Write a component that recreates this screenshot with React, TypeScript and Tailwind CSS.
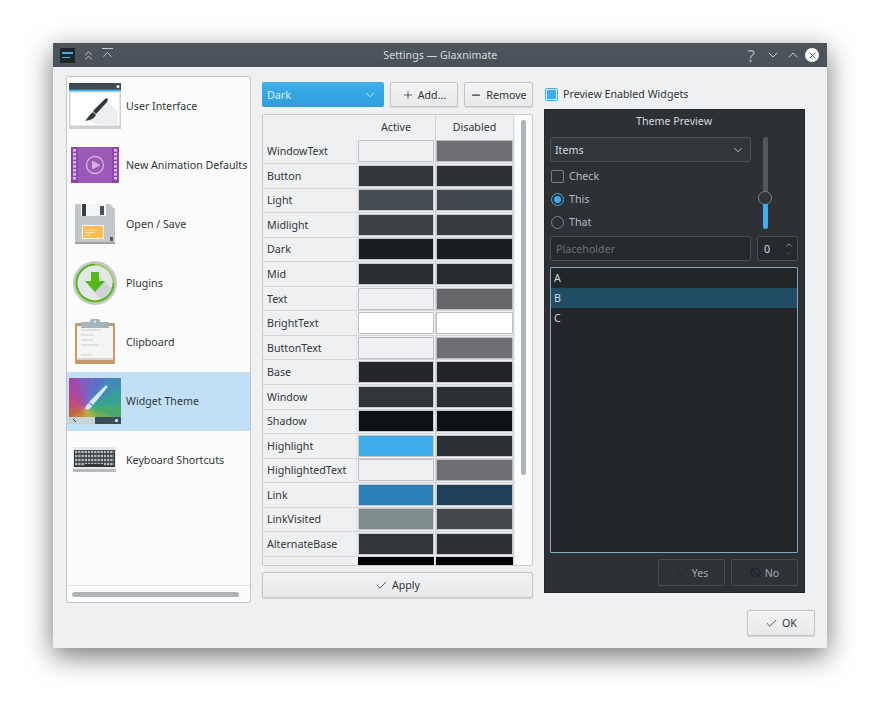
import { Check, ChevronDown, ChevronUp, ChevronsUp, Minus, Plus, X } from 'lucide-react';
import type { ReactNode } from 'react';

type Row = { name: string; active: string; disabled: string; outline?: boolean };

const rows: Row[] = [
  { name: 'WindowText', active: 'bg-[#eff0f1]', disabled: 'bg-[#6d6f72]', outline: true },
  { name: 'Button', active: 'bg-[#31363b]', disabled: 'bg-[#2d3135]' },
  { name: 'Light', active: 'bg-[#454c54]', disabled: 'bg-[#40464d]' },
  { name: 'Midlight', active: 'bg-[#3c4146]', disabled: 'bg-[#363b40]' },
  { name: 'Dark', active: 'bg-[#1b1e20]', disabled: 'bg-[#1b1e20]' },
  { name: 'Mid', active: 'bg-[#2a2e32]', disabled: 'bg-[#282c30]' },
  { name: 'Text', active: 'bg-[#eff0f1]', disabled: 'bg-[#656768]', outline: true },
  { name: 'BrightText', active: 'bg-white', disabled: 'bg-white', outline: true },
  { name: 'ButtonText', active: 'bg-[#eff0f1]', disabled: 'bg-[#6d6f72]', outline: true },
  { name: 'Base', active: 'bg-[#232629]', disabled: 'bg-[#212427]' },
  { name: 'Window', active: 'bg-[#31363b]', disabled: 'bg-[#2d3135]' },
  { name: 'Shadow', active: 'bg-[#0f1214]', disabled: 'bg-[#0f1214]' },
  { name: 'Highlight', active: 'bg-[#3daee9]', disabled: 'bg-[#2d3135]' },
  { name: 'HighlightedText', active: 'bg-[#eff0f1]', disabled: 'bg-[#6d6f72]', outline: true },
  { name: 'Link', active: 'bg-[#2980b9]', disabled: 'bg-[#213f57]' },
  { name: 'LinkVisited', active: 'bg-[#7f8c8d]', disabled: 'bg-[#43484b]' },
  { name: 'AlternateBase', active: 'bg-[#31363b]', disabled: 'bg-[#2d3135]' },
];

const pages = [
  { name: 'User Interface', icon: <UiIcon /> },
  { name: 'New Animation Defaults', icon: <FilmIcon /> },
  { name: 'Open / Save', icon: <FloppyIcon /> },
  { name: 'Plugins', icon: <PluginIcon /> },
  { name: 'Clipboard', icon: <ClipboardIcon /> },
  { name: 'Widget Theme', icon: <ThemeIcon />, selected: true },
  { name: 'Keyboard Shortcuts', icon: <KeyboardIcon /> },
];

function UiIcon() {
  return (
    <svg width="52" height="46" viewBox="0 0 52 46">
      <rect width="52" height="8" fill="#3f4a52" />
      <rect y="6.5" width="52" height="2" fill="#3daee9" />
      <circle cx="49" cy="3.5" r="1.5" fill="#fff" />
      <rect x="0" y="8.5" width="52" height="37.5" fill="#ccd0d2" />
      <rect x="1.5" y="9.5" width="49" height="33" fill="#fff" />
      <path d="M34 15 L49 28 V42 H30 L16 36 Z" fill="#eceeef" />
      <path d="M36 16 C38 14 40 16 38 19 L27 31 L24 28 Z" fill="#31363b" />
      <path d="M24 29 L27 32 C25 36 21 37 16 38 C19 35 20 32 24 29 Z" fill="#31363b" />
    </svg>
  );
}

function FilmIcon() {
  const holes = [0, 1, 2, 3, 4, 5, 6, 7];
  return (
    <svg width="48" height="36" viewBox="0 0 48 36">
      <rect width="48" height="36" fill="#8e44ad" />
      <rect x="7" y="0" width="34" height="36" fill="#9b59b6" />
      {holes.map((i) => (
        <g key={i} fill="#d9b8e8">
          <rect x="2" y={2 + i * 4} width="3" height="2.6" />
          <rect x="43" y={2 + i * 4} width="3" height="2.6" />
        </g>
      ))}
      <circle cx="24" cy="18" r="8.5" fill="none" stroke="#d3b3e2" strokeWidth="1.3" />
      <path d="M21 13.5 L29.5 18 L21 22.5 Z" fill="#d3b3e2" />
    </svg>
  );
}

function FloppyIcon() {
  return (
    <svg width="40" height="40" viewBox="0 0 40 40">
      <path d="M0 0 H35 L40 5 V40 H0 Z" fill="#c4c7c9" />
      <rect y="38" width="40" height="2" fill="#9ea2a5" />
      <rect x="6" y="0" width="25" height="12" fill="#f4f5f5" />
      <rect x="7" y="0" width="4" height="12" fill="#3a3f44" />
      <rect x="25" y="2" width="4" height="9" fill="#4b5157" />
      <rect x="7" y="21" width="22" height="14" fill="#f5f6f6" />
      <rect x="8" y="22" width="20" height="12" fill="#fdbc4b" />
      <path d="M10 26 H23 M10 28.5 H20 M10 31 H16" stroke="#fbe3b4" strokeWidth="1" />
      <rect x="35" y="33" width="3" height="4" fill="#565b60" />
    </svg>
  );
}

function PluginIcon() {
  return (
    <svg width="44" height="44" viewBox="0 0 44 44">
      <circle cx="22" cy="22" r="22" fill="#c4c7c9" />
      <circle cx="22" cy="22" r="19.5" fill="#e4e6e7" />
      <path d="M22 12 L40 28 A19.5 19.5 0 0 1 30 40 L16 26 Z" fill="#d0d3d4" />
      <path d="M22 3.5 A18.5 18.5 0 1 0 40.5 22" fill="none" stroke="#55b81a" strokeWidth="2" />
      <path d="M22 3.5 A18.5 18.5 0 0 1 40.5 22" fill="none" stroke="#9ccc6a" strokeWidth="2" />
      <path d="M18 11 H26 V20 H32 L22 31 L12 20 H18 Z" fill="#55b81a" />
    </svg>
  );
}

function ClipboardIcon() {
  return (
    <svg width="40" height="45" viewBox="0 0 40 45">
      <rect y="4" width="40" height="41" rx="1" fill="#c79a68" />
      <rect x="2" y="7" width="36" height="34" fill="#f4f5f5" />
      <rect x="2" y="39" width="36" height="2" fill="#d3d5d6" />
      <path d="M6 11 H26 M6 16 H18 M6 21 H18 M6 26 H24 M6 36 H17" stroke="#c9cccd" strokeWidth="1" />
      <rect x="6" y="3" width="28" height="6" rx="1" fill="#a5b4bf" />
      <rect x="15" y="0" width="10" height="5" rx="2" fill="#a5b4bf" />
      <circle cx="20" cy="2.5" r="0.9" fill="#fff" />
    </svg>
  );
}

// rainbow wedges fanning out of the brush tip, clockwise from the lower left
const wedges = ['#c4623f', '#c0506a', '#b8468c', '#a44aa8', '#7f5cc0', '#5a72c6', '#3f8cb4', '#38a092', '#4ba86c', '#74ae4c', '#a0b23c', '#bcae38', '#c89440', '#c87a40'];

function ThemeIcon() {
  const cx = 18;
  const cy = 30;
  const r = 70;
  const start = 150;
  const step = 360 / wedges.length;
  const point = (deg: number) => {
    const a = (deg * Math.PI) / 180;
    return (cx + r * Math.cos(a)).toFixed(1) + ' ' + (cy + r * Math.sin(a)).toFixed(1);
  };
  return (
    <svg width="52" height="46" viewBox="0 0 52 46">
      <clipPath id="themeClip">
        <rect width="52" height="39" />
      </clipPath>
      <filter id="themeBlur" x="-20%" y="-20%" width="140%" height="140%">
        <feGaussianBlur stdDeviation="1.6" />
      </filter>
      <g clipPath="url(#themeClip)">
        <g filter="url(#themeBlur)">
          {wedges.map((color, i) => (
            <path key={color} d={'M' + cx + ' ' + cy + ' L' + point(start + i * step) + ' L' + point(start + (i + 1) * step + 0.5) + ' Z'} fill={color} />
          ))}
        </g>
      </g>
      <rect y="39" width="26" height="7" fill="#c8d3d3" />
      <rect x="26" y="39" width="26" height="7" fill="#3a4d5a" />
      <circle cx="47.5" cy="42.5" r="1.5" fill="#fff" />
      <path d="M36 8 C38 7 39 8 38 10 L24 27 L20 24 Z" fill="#d6e8f4" />
      <path d="M20 25 L23 28 C22 31 19 32 16 31 C17 29 17 27 20 25 Z" fill="#d6e8f4" />
      <path d="M4 41 L7 44" stroke="#31363b" strokeWidth="1" />
    </svg>
  );
}

function KeyboardIcon() {
  const keys = [0, 1, 2, 3];
  return (
    <svg width="43" height="25" viewBox="0 0 43 25">
      <rect width="43" height="25" fill="#e6e7e8" />
      <rect x="1" y="3" width="41" height="17" fill="#31363b" />
      {keys.map((r) => (
        <path key={r} d={'M2 ' + (5 + r * 4) + ' H41'} stroke="#b4b8ba" strokeWidth="2.4" strokeDasharray="2.4 0.8" />
      ))}
      <rect x="12" y="17" width="18" height="3" fill="#31363b" />
      <rect y="22" width="43" height="3" fill="#b7babc" />
    </svg>
  );
}

function Swatch({ color, outline, wide }: { color: string; outline?: boolean; wide?: boolean }) {
  return (
    <div className="h-full flex items-center justify-center border-r border-[#d3d5d7]">
      <div className={(wide ? 'w-[77px]' : 'w-[76px]') + ' h-[22px] rounded-[1px] border ' + (outline ? 'border-[#bcbfc1] ' : 'border-[#c6c8ca] ') + color} />
    </div>
  );
}

function LightButton({ children, className }: { children: ReactNode; className: string }) {
  return (
    <div className={'flex items-center justify-center gap-[4px] rounded-[2px] border border-[#c3c5c7] bg-gradient-to-b from-[#f2f3f4] to-[#e8e9ea] shadow-[0_1px_1px_rgba(0,0,0,0.12)] ' + className}>
      {children}
    </div>
  );
}

function DarkButton({ children }: { children: ReactNode }) {
  return (
    <div className="w-[67px] h-[27px] flex items-center justify-center gap-[4px] rounded-[2px] border border-[#474c52] bg-[#2f3338] text-[#a2a6a9]">
      {children}
    </div>
  );
}

export default function App() {
  return (
    <div className="w-[880px] h-[711px] bg-white pt-[43px] pl-[53px] overflow-hidden text-[10.67px] text-[#31363b] font-['Noto_Sans',sans-serif]">
      <div className="w-[774px] h-[605px] flex flex-col bg-[#eff0f1] shadow-[0_8px_28px_rgba(0,0,0,0.55)] rounded-t-[2px]">
        <div className="h-[24px] shrink-0 flex items-center pl-[7px] pr-[8px] bg-gradient-to-b from-[#4d565d] to-[#49525a] text-[#c9cccd]">
          <div className="w-[15px] h-[15px] bg-[#232629] flex flex-col justify-center gap-[3px] px-[2px]">
            <div className="h-[1.5px] w-[11px] bg-[#3daee9]" />
            <div className="h-[1.5px] w-[8px] bg-[#3daee9]" />
          </div>
          <ChevronsUp className="ml-[6px]" size={15} strokeWidth={1.5} />
          <div className="ml-[4px] flex flex-col items-center">
            <div className="w-[11px] h-px bg-[#c9cccd]" />
            <ChevronUp className="-mt-[2px]" size={15} strokeWidth={1.5} />
          </div>
          <div className="flex-1 text-center text-[#d5d7d8] pl-[18px]">Settings — Glaxnimate</div>
          <span className="text-[17px] leading-none text-[#a9adb0] mr-[10px]">?</span>
          <ChevronDown size={16} strokeWidth={1.5} className="mr-[4px]" />
          <ChevronUp size={16} strokeWidth={1.5} className="mr-[4px]" />
          <div className="w-[14px] h-[14px] rounded-full bg-white flex items-center justify-center text-[#4d565d]">
            <X size={11} strokeWidth={2} />
          </div>
        </div>

        <div className="flex-1 flex flex-col px-[13px] pt-[9px]">
          <div className="flex">
            <div className="w-[185px] h-[527px] flex flex-col shrink-0 bg-[#fcfcfc] border border-[#c3c5c7] rounded-[2px]">
              <div className="flex-1">
                {pages.map((page) => (
                  <div key={page.name} className={'h-[59px] pb-[2px] flex items-center ' + (page.selected ? 'bg-[#c2e0f5]' : '')}>
                    <div className="w-[55px] mr-[4px] flex justify-center shrink-0">{page.icon}</div>
                    <span className="whitespace-nowrap">{page.name}</span>
                  </div>
                ))}
              </div>
              <div className="h-[17px] flex items-center px-[5px] border-t border-[#e3e4e5]">
                <div className="w-[167px] h-[5px] rounded-full bg-[#b0b3b6]" />
              </div>
            </div>

            <div className="w-[271px] ml-[11px] mt-[6px] shrink-0 flex flex-col">
              <div className="h-[25px] flex gap-[6px]">
                <div className="w-[122px] flex items-center justify-between pl-[5px] pr-[7px] rounded-[2px] bg-gradient-to-b from-[#3daee9] to-[#2f9fdc] text-[#d8eefa]">
                  <span>Dark</span>
                  <ChevronDown size={14} strokeWidth={1.5} />
                </div>
                <LightButton className="w-[68px]">
                  <Plus size={12} strokeWidth={1.5} />
                  <span>Add...</span>
                </LightButton>
                <LightButton className="w-[69px]">
                  <Minus size={12} strokeWidth={2.5} />
                  <span>Remove</span>
                </LightButton>
              </div>

              <div className="mt-[7px] h-[452px] flex bg-[#fcfcfc] border border-[#c9cbcd] rounded-[2px] overflow-hidden">
                <div className="w-[252px] shrink-0 bg-[#eff0f1]">
                  <div className="h-[24.5px] grid grid-cols-[94px_79px_78px] items-center">
                    <div />
                    <div className="h-full flex items-center justify-center border-r border-[#d3d5d7]">Active</div>
                    <div className="h-full flex items-center justify-center border-r border-[#d3d5d7]">Disabled</div>
                  </div>
                  {rows.map((row) => (
                    <div key={row.name} className="h-[24.55px] grid grid-cols-[94px_79px_78px] items-center border-b border-[#d3d5d7]">
                      <div className="pl-[4px] h-full flex items-center border-r border-[#e3e4e5]">{row.name}</div>
                      <Swatch color={row.active} outline={row.outline} />
                      <Swatch color={row.disabled} outline={row.outline} wide />
                    </div>
                  ))}
                  <div className="grid grid-cols-[94px_79px_78px] h-[10px]">
                    <div />
                    <div className="flex justify-center border-r border-[#d3d5d7]"><div className="w-[76px] h-[10px] bg-black" /></div>
                    <div className="flex justify-center border-r border-[#d3d5d7]"><div className="w-[77px] h-[10px] bg-black" /></div>
                  </div>
                </div>
                <div className="flex-1 pl-[6px] pt-[5px]">
                  <div className="w-[5px] h-[355px] rounded-full bg-[#b0b3b6]" />
                </div>
              </div>

              <LightButton className="mt-[6px] h-[26px] w-full">
                <Check size={13} strokeWidth={1.5} />
                <span>Apply</span>
              </LightButton>
            </div>

            <div className="w-[261px] ml-[11px] mt-[11px] shrink-0 flex flex-col">
              <div className="h-[14px] flex items-center gap-[5px] pl-px">
                <div className="w-[13px] h-[13px] rounded-[2px] border border-[#3daee9] bg-[#eff0f1] flex items-center justify-center">
                  <div className="w-[9px] h-[9px] bg-[#3daee9]" />
                </div>
                <span>Preview Enabled Widgets</span>
              </div>

              <div className="mt-[8px] h-[484px] flex flex-col pl-[5px] pr-[6px] bg-[#2d3136] border border-[#23262a] text-[#d5d7d8]">
                <div className="h-[21px] flex items-center justify-center">Theme Preview</div>
                <div className="mt-[6px] flex">
                  <div className="w-[201px] shrink-0">
                    <div className="h-[25px] flex items-center justify-between pl-[4px] pr-[5px] rounded-[2px] border border-[#4a4f55] bg-[#31363b]">
                      <span>Items</span>
                      <ChevronDown size={14} strokeWidth={1.5} />
                    </div>
                    <div className="mt-[7px] h-[14px] flex items-center gap-[5px] pl-px text-[#b6b9bb]">
                      <div className="w-[13px] h-[13px] rounded-[2px] border border-[#7b7f83]" />
                      <span>Check</span>
                    </div>
                    <div className="mt-[9px] h-[14px] flex items-center gap-[5px] pl-px text-[#b6b9bb]">
                      <div className="w-[13px] h-[13px] rounded-full border border-[#3daee9] flex items-center justify-center">
                        <div className="w-[7px] h-[7px] rounded-full bg-[#3daee9]" />
                      </div>
                      <span>This</span>
                    </div>
                    <div className="mt-[9px] h-[14px] flex items-center gap-[5px] pl-px text-[#b6b9bb]">
                      <div className="w-[13px] h-[13px] rounded-full border border-[#7b7f83]" />
                      <span>That</span>
                    </div>
                  </div>
                  <div className="ml-[7px] w-[14px] h-[92px] flex flex-col items-center">
                    <div className="w-[5px] h-[55px] rounded-t-full bg-[#54585c]" />
                    <div className="w-[14px] h-[14px] -my-[1px] shrink-0 rounded-full border border-[#7b7f83] bg-[#31363b]" />
                    <div className="w-[5px] flex-1 rounded-b-full bg-[#3daee9]" />
                  </div>
                </div>
                <div className="mt-[7px] flex gap-[6px]">
                  <div className="w-[201px] h-[25px] flex items-center pl-[5px] rounded-[2px] border border-[#4a4f55] bg-[#26292d] text-[#6b6f73]">Placeholder</div>
                  <div className="w-[41px] h-[25px] flex items-center justify-between pl-[6px] pr-[3px] rounded-[2px] border border-[#4a4f55] bg-[#26292d]">
                    <span>0</span>
                    <div className="flex flex-col">
                      <ChevronUp size={10} strokeWidth={1.5} className="-mb-px" />
                      <ChevronDown size={10} strokeWidth={1.5} className="text-[#5d6165] -mt-px" />
                    </div>
                  </div>
                </div>
                <div className="mt-[6px] h-[286px] bg-[#232629] border border-[#7fa8bf] rounded-[1px]">
                  <div className="h-[20px] flex items-center pl-[3px]">A</div>
                  <div className="h-[20px] flex items-center pl-[3px] bg-[#224e65]">B</div>
                  <div className="h-[20px] flex items-center pl-[3px]">C</div>
                </div>
                <div className="mt-[6px] flex justify-end gap-[6px]">
                  <DarkButton>
                    <Check size={13} strokeWidth={1.5} className="text-[#1f2225]" />
                    <span>Yes</span>
                  </DarkButton>
                  <DarkButton>
                    <svg width="11" height="11" viewBox="0 0 11 11" fill="none" stroke="#1f2225" strokeWidth="1.2">
                      <circle cx="5.5" cy="5.5" r="4.5" />
                      <path d="M2.3 2.3 L8.7 8.7" />
                    </svg>
                    <span>No</span>
                  </DarkButton>
                </div>
              </div>
            </div>
          </div>

          <div className="mt-[7px] flex justify-end">
            <LightButton className="w-[68px] h-[26px] mr-[-1px]">
              <Check size={13} strokeWidth={1.5} />
              <span>OK</span>
            </LightButton>
          </div>
        </div>
      </div>
    </div>
  );
}
